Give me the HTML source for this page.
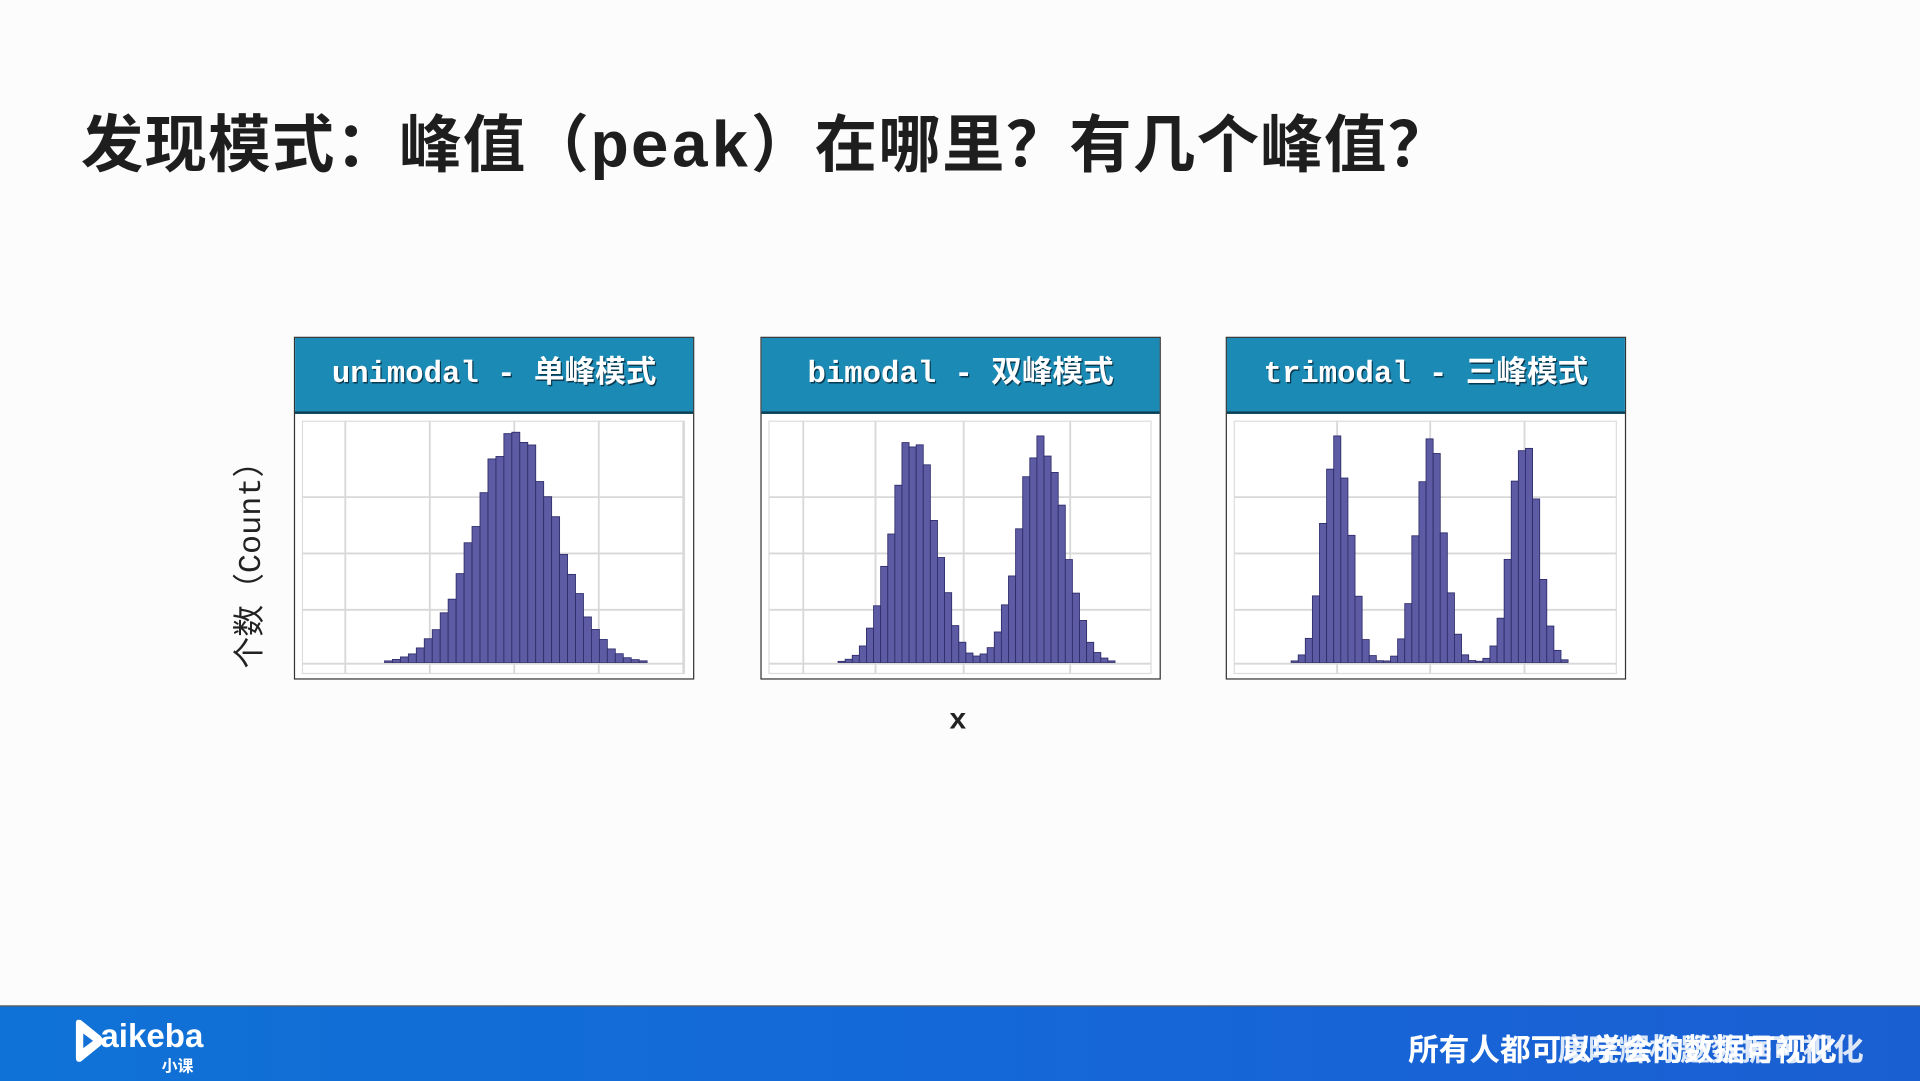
<!DOCTYPE html>
<html><head><meta charset="utf-8">
<style>
html,body{margin:0;padding:0;width:1920px;height:1080px;overflow:hidden;background:#fcfcfc}
#w{position:absolute;left:0;top:0;width:1568px;height:882px;transform:scale(1.22449);transform-origin:0 0;font-family:"Liberation Sans","Noto Sans CJK SC",sans-serif}
.title{position:absolute;left:66px;top:77px;font-size:51px;font-weight:bold;color:#1e1e1e;white-space:nowrap;letter-spacing:1px}
.title .m{font-family:"Liberation Mono","Noto Sans CJK SC",monospace;font-size:53px}
.box{position:absolute;top:275px;width:325px;height:278px;border:1px solid #333;background:#fff}
.hd{height:60px;background:#1b8bb6;border-bottom:2px solid #0c3f56;color:#fff;font:bold 25px "Liberation Mono","Noto Sans CJK SC",monospace;text-align:center;line-height:60px;text-shadow:1px 1px 0 #0a3a50;white-space:nowrap}
.ylab{position:absolute;left:202px;top:455px;transform:translate(-50%,-50%) rotate(-90deg);font:26px "Liberation Mono","Noto Sans CJK SC",monospace;color:#222;white-space:nowrap}
.xl{position:absolute;left:775px;top:576px;font:bold 24px "Liberation Mono",monospace;color:#222}
.foot{position:absolute;left:0;top:821px;width:1568px;height:61px;background:linear-gradient(90deg,#0f72d6,#1666d8 60%,#1a5fd2);border-top:1px solid #555}
.ft{position:absolute;top:16px;color:#fff;font:bold 25px "Liberation Sans","Noto Sans CJK SC",sans-serif;white-space:nowrap}
</style></head><body><div id="w">
<div class="title">发现模式：峰值（<span class="m">peak</span>）在哪里？有几个峰值？</div>
<div class="box" style="left:240px"><div class="hd">unimodal - 单峰模式</div><svg id="s0" width="325" height="216"></svg></div>
<div class="box" style="left:621px"><div class="hd">bimodal - 双峰模式</div><svg id="s1" width="325" height="216"></svg></div>
<div class="box" style="left:1001px"><div class="hd">trimodal - 三峰模式</div><svg id="s2" width="325" height="216"></svg></div>
<div class="ylab">个数（Count）</div>
<div class="xl">x</div>
<div class="foot">
<svg style="position:absolute;left:58px;top:10px" width="30" height="36"><path d="M4 3 Q4 0 8 1 L24 14 Q28 18 24 22 L8 35 Q4 36 4 32 Z" fill="#fff"/><path d="M10 12 L18 18 L10 24Z" fill="#1370d6"/></svg>
<div style="position:absolute;left:82px;top:9px;color:#fff;font:bold 27px 'Liberation Sans',sans-serif">aikeba</div>
<div style="position:absolute;left:132px;top:38px;color:#fff;font:bold 13px 'Noto Sans CJK SC',sans-serif">小课</div>
<div class="ft" style="left:1150px">所有人都可以学会的数据可视化</div>
<div class="ft" style="left:1272px;opacity:.85">康晓辉标题数据可视化</div>
</div>
</div>
<script>
function mk(id,centers,sig,h,x0,x1,bw,gx){
 var s=document.getElementById(id),o='';
 o+='<rect x="6" y="6" width="312" height="206" fill="#fff" stroke="#ddd"/>';
 gx.forEach(function(x){o+='<line x1="'+x+'" y1="6" x2="'+x+'" y2="212" stroke="#d8d8d8" stroke-width="1.5"/>'});
 [68,114,160,204].forEach(function(y){o+='<line x1="6" y1="'+y+'" x2="318" y2="'+y+'" stroke="#d8d8d8" stroke-width="1.5"/>'});
 var n=0;
 for(var x=x0;x<x1;x+=bw){var c=x+bw/2,v=0;centers.forEach(function(m){v+=Math.exp(-(c-m)*(c-m)/(2*sig*sig))});
  n++;var j=1+((n*37)%11-5)*0.012;var hh=Math.min(h,h*v*j);if(hh<0.8)continue;
  o+='<rect x="'+x+'" y="'+(203-hh)+'" width="'+bw+'" height="'+hh+'" fill="#5d5ba3" stroke="#2e2c6a" stroke-width="0.7"/>';}
 s.innerHTML=o;}
mk('s0',[180],33,188,60,300,6.5,[41,110,179,248,317]);
mk('s1',[124,229],18,185,45,300,5.8,[34,93,165,252]);
mk('s2',[90,166,243],11,185,35,300,5.8,[90,166,243]);
</script>
</body></html>
